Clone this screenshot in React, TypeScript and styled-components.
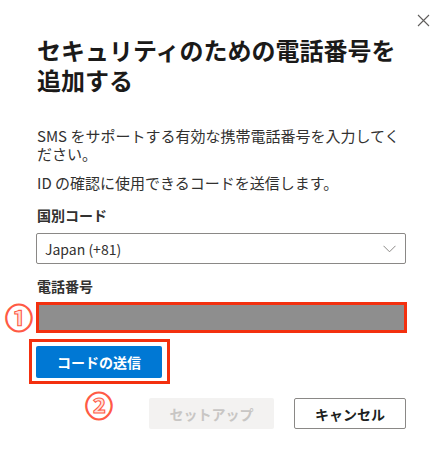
import React from "react";
import styled, { createGlobalStyle } from "styled-components";

const Global = createGlobalStyle`
  html, body { margin: 0; padding: 0; background: #fff; }
  body { font-family: "Noto Sans CJK JP", "Noto Sans", sans-serif; }
`;

const Page = styled.div`
  position: relative;
  width: 443px;
  height: 465px;
  background: #fff;
  color: #323130;
  font-family: "Noto Sans CJK JP", "Noto Sans", sans-serif;
`;

const Close = styled.button`
  position: absolute;
  top: 6px;
  right: 6px;
  width: 28px;
  height: 28px;
  border: none;
  background: transparent;
  padding: 0;
  display: flex;
  align-items: center;
  justify-content: center;
  color: #605e5c;
`;

const Dialog = styled.div`
  display: flex;
  flex-direction: column;
  padding: 35px 37px 0 36px;
`;

const Title = styled.h1`
  margin: 0 0 0 1px;
  font-size: 24px;
  line-height: 30px;
  font-weight: 700;
  color: #1b1a19;
`;

const Text = styled.p<{ $mt: number }>`
  margin: ${(p) => p.$mt}px 0 0 1px;
  font-size: 15px;
  line-height: 18px;
  font-weight: 400;
  color: #323130;
`;

const Label = styled.label<{ $mt: number }>`
  margin-top: ${(p) => p.$mt}px;
  margin-left: 1px;
  font-size: 14px;
  line-height: 20px;
  font-weight: 700;
  color: #323130;
`;

const Select = styled.div`
  margin-top: 8px;
  box-sizing: border-box;
  height: 31px;
  border: 1px solid #8a8886;
  border-radius: 2px;
  display: flex;
  align-items: center;
  justify-content: space-between;
  padding: 0 9px 0 8px;
  font-size: 14px;
  color: #323130;
`;

const InputRow = styled.div`
  position: relative;
  margin-top: 6px;
`;

const MaskedInput = styled.div`
  box-sizing: border-box;
  height: 31px;
  width: 371px;
  border: 3px solid #f3300f;
  background: #8e8e8e;
`;

const Marker = styled.span<{ $left: number; $top: number }>`
  position: absolute;
  left: ${(p) => p.$left}px;
  top: ${(p) => p.$top}px;
  font-size: 28px;
  line-height: 28px;
  font-weight: 700;
  color: #ffe2dc;
  -webkit-text-stroke: 1.1px #ff5a45;
  font-family: "Noto Sans CJK JP", sans-serif;
`;

const Highlight = styled.div`
  align-self: flex-start;
  margin-top: 6px;
  margin-left: -7px;
  border: 3px solid #f3300f;
  padding: 4px 5px 3px 4px;
`;

const PrimaryButton = styled.button`
  display: block;
  width: 126px;
  height: 32px;
  border: none;
  border-radius: 2px;
  background: #0078d4;
  color: #fff;
  font-family: inherit;
  font-size: 14px;
  font-weight: 700;
  padding: 0;
`;

const Footer = styled.div`
  position: relative;
  margin-top: 14px;
  display: flex;
  justify-content: flex-end;
  gap: 20px;
`;

const FooterButton = styled.button<{ $disabled?: boolean; $w: number }>`
  box-sizing: border-box;
  width: ${(p) => p.$w}px;
  height: 31px;
  border-radius: 2px;
  border: ${(p) => (p.$disabled ? "none" : "1px solid #8a8886")};
  background: ${(p) => (p.$disabled ? "#f3f2f1" : "#fff")};
  color: ${(p) => (p.$disabled ? "#c8c6c4" : "#201f1e")};
  font-family: inherit;
  font-size: 14px;
  font-weight: 700;
  padding: 0;
`;

export default function App() {
  return (
    <Page>
      <Global />
      <Close aria-label="閉じる">
        <svg width="13" height="13" viewBox="0 0 13 13">
          <path d="M1 1 L12 12 M12 1 L1 12" stroke="#605e5c" strokeWidth="1.1" fill="none" />
        </svg>
      </Close>
      <Dialog>
        <Title>セキュリティのための電話番号を追加する</Title>
        <Text $mt={32}>SMS をサポートする有効な携帯電話番号を入力してください。</Text>
        <Text $mt={11}>ID の確認に使用できるコードを送信します。</Text>
        <Label $mt={13}>国別コード</Label>
        <Select>
          <span>Japan (+81)</span>
          <svg width="13" height="8" viewBox="0 0 13 8">
            <path d="M0.5 0.8 L6.5 6.8 L12.5 0.8" stroke="#8a8886" strokeWidth="1" fill="none" />
          </svg>
        </Select>
        <Label $mt={12}>電話番号</Label>
        <InputRow>
          <MaskedInput />
          <Marker $left={-31} $top={1}>①</Marker>
        </InputRow>
        <Highlight>
          <PrimaryButton>コードの送信</PrimaryButton>
        </Highlight>
        <Footer>
          <Marker $left={49} $top={-7}>②</Marker>
          <FooterButton $disabled $w={125}>セットアップ</FooterButton>
          <FooterButton $w={112}>キャンセル</FooterButton>
        </Footer>
      </Dialog>
    </Page>
  );
}
